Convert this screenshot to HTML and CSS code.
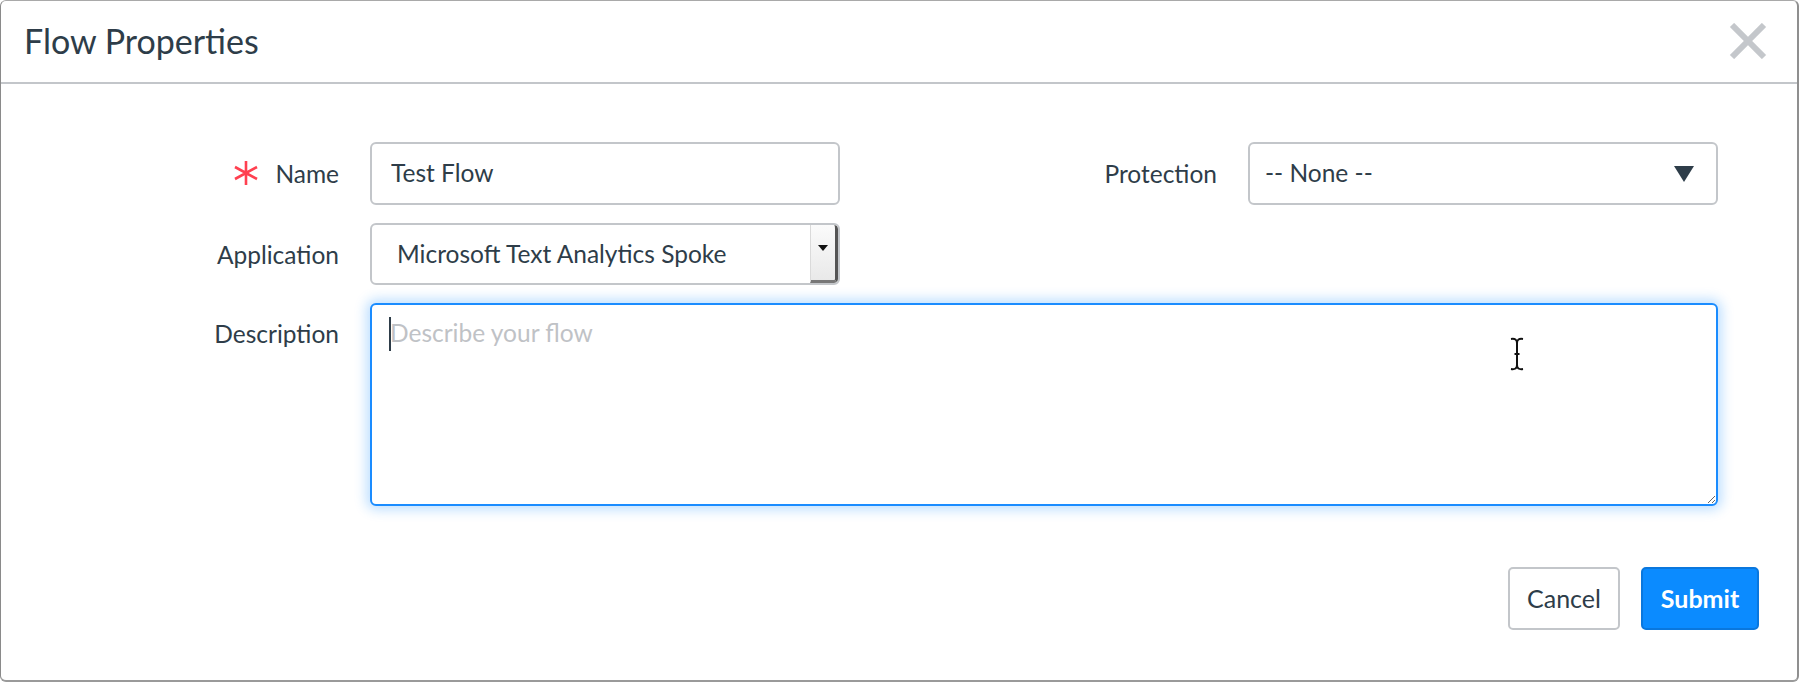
FILE: index.html
```html
<!DOCTYPE html>
<html lang="en">
<head>
<meta charset="utf-8">
<title>Flow Properties</title>
<link rel="stylesheet" href="styles.css">
</head>
<body>
<div class="modal">
  <header class="modal-header">
    <h1 class="modal-title">Flow Properties</h1>
    <button class="close" type="button" aria-label="Close">
      <svg width="38" height="36" viewBox="0 0 38 36"><path d="M3 2 L35 34 M35 2 L3 34" stroke="#c4c7cb" stroke-width="6" fill="none"/></svg>
    </button>
  </header>
  <div class="modal-body">
    <form class="form-grid">
      <label class="lbl"><svg class="req" width="26" height="24" viewBox="0 0 26 24"><path d="M13 0 V24 M2 6 L24 18 M2 18 L24 6" stroke="#ff4050" stroke-width="2.6" fill="none"/></svg>Name</label>
      <input class="field field-name" type="text" value="Test Flow">
      <label class="lbl">Protection</label>
      <div class="field field-select">
        <span>-- None --</span>
        <svg class="tri" width="20" height="16" viewBox="0 0 20 16"><path d="M0 0 H20 L10 16 Z" fill="#2e3d49"/></svg>
      </div>
      <label class="lbl">Application</label>
      <div class="field field-app">
        <span class="app-text">Microsoft Text Analytics Spoke</span>
        <span class="app-btn"><svg width="10" height="6" viewBox="0 0 10 6"><path d="M0 0 H10 L5 6 Z" fill="#111"/></svg></span>
      </div>
      <div class="spacer"></div>
      <label class="lbl lbl-top">Description</label>
      <div class="desc-wrap">
        <textarea class="field field-desc" placeholder="Describe your flow"></textarea>
        <span class="caret"></span>
        <svg class="ibeam" width="16" height="34" viewBox="0 0 16 34"><path d="M2 2 Q8 1 8 6 Q8 1 14 2 M8 6 V28 M2 32 Q8 33 8 28 Q8 33 14 32 M5.5 17 H10.5" stroke="#111" stroke-width="2" fill="none"/></svg>
      </div>
    </form>
  </div>
  <footer class="modal-footer">
    <button class="btn btn-default" type="button">Cancel</button>
    <button class="btn btn-primary" type="button">Submit</button>
  </footer>
</div>
</body>
</html>
```
FILE: styles.css
```css
* { box-sizing: border-box; }
html, body { margin: 0; padding: 0; background: #ffffff; }
body {
  font-family: "Lato", "Open Sans", sans-serif;
  color: #2e3d49;
}
.modal {
  width: 1799px;
  height: 682px;
  border: 1px solid #a9a9a9;
  border-left-color: #8a8a8a;
  border-right: 2px solid #8f8f8f;
  border-bottom: 2px solid #9a9a9a;
  border-radius: 6px;
  background: #fff;
  display: flex;
  flex-direction: column;
}
.modal-header {
  height: 83px;
  border-bottom: 2px solid #c3c6ca;
  display: flex;
  align-items: center;
  justify-content: space-between;
  padding: 0 30px 0 23px;
  flex: none;
}
.modal-title {
  margin: 0;
  font-size: 34px;
  font-weight: 400;
  line-height: 1;
  padding-bottom: 2px;
}
.close {
  border: 0;
  background: none;
  padding: 0;
  width: 38px;
  height: 36px;
  display: block;
  margin-bottom: 2px;
}
.close svg { display: block; }
.modal-body {
  padding-top: 58px;
}
.form-grid {
  margin: 0;
  display: grid;
  grid-template-columns: 338px 470px 346px 470px;
  grid-template-rows: 63px 62px 203px;
  column-gap: 31px;
  row-gap: 18px;
}
.lbl {
  font-size: 24.5px;
  display: flex;
  align-items: center;
  justify-content: flex-end;
  white-space: nowrap;
}
.lbl-top { align-items: flex-start; padding-top: 16px; }
.req { margin-right: 16px; margin-top: -2px; }
.field {
  font-family: inherit;
  font-size: 24.5px;
  color: #2e3d49;
  border: 2px solid #c3c6ca;
  border-radius: 6px;
  background: #fff;
  margin: 0;
  width: 100%;
  height: 100%;
}
.field-name { padding: 0 0 2px 19px; outline: none; }
.field-select {
  display: flex;
  align-items: center;
  justify-content: space-between;
  padding: 0 22px 0 15px;
}
.field-select span { padding-bottom: 2px; }
.field-app {
  display: flex;
  align-items: stretch;
  padding: 0;
  overflow: hidden;
}
.app-text {
  flex: 1;
  display: flex;
  align-items: center;
  padding: 0 0 2px 25px;
}
.app-btn {
  width: 28px;
  flex: none;
  display: flex;
  align-items: center;
  justify-content: center;
  background: linear-gradient(#fbfbfb, #e9e9e9);
  border-left: 1px solid #dadada;
  border-right: 3px solid #555;
  border-bottom: 3px solid #777;
  border-radius: 0 4px 4px 0;
  padding-bottom: 10px;
}
.spacer { grid-column: 3 / 5; }
.desc-wrap {
  grid-column: 2 / 5;
  position: relative;
}
.field-desc {
  display: block;
  border-color: #1a8cff;
  box-shadow: 0 0 12px 4px rgba(30, 144, 255, 0.28);
  padding: 12px 18px;
  outline: none;
  resize: both;
  line-height: 32px;
}
.field-desc::placeholder { color: #bfc2c6; opacity: 1; }
.caret {
  position: absolute;
  left: 19px;
  top: 14px;
  width: 2px;
  height: 34px;
  background: #2e3d49;
}
.ibeam {
  position: absolute;
  left: 1139px;
  top: 34px;
}
.modal-footer {
  display: flex;
  justify-content: flex-end;
  gap: 21px;
  padding: 61px 38px 0 0;
}
.btn {
  font-family: inherit;
  font-size: 25px;
  height: 63px;
  border-radius: 5px;
  padding: 0 0 2px;
  cursor: pointer;
}
.btn-default {
  width: 112px;
  background: #fff;
  border: 2px solid #c3c6ca;
  color: #2e3d49;
}
.btn-primary {
  width: 118px;
  background: #0b8bff;
  border: 2px solid #0a77dd;
  color: #fff;
  font-weight: 700;
}
```
